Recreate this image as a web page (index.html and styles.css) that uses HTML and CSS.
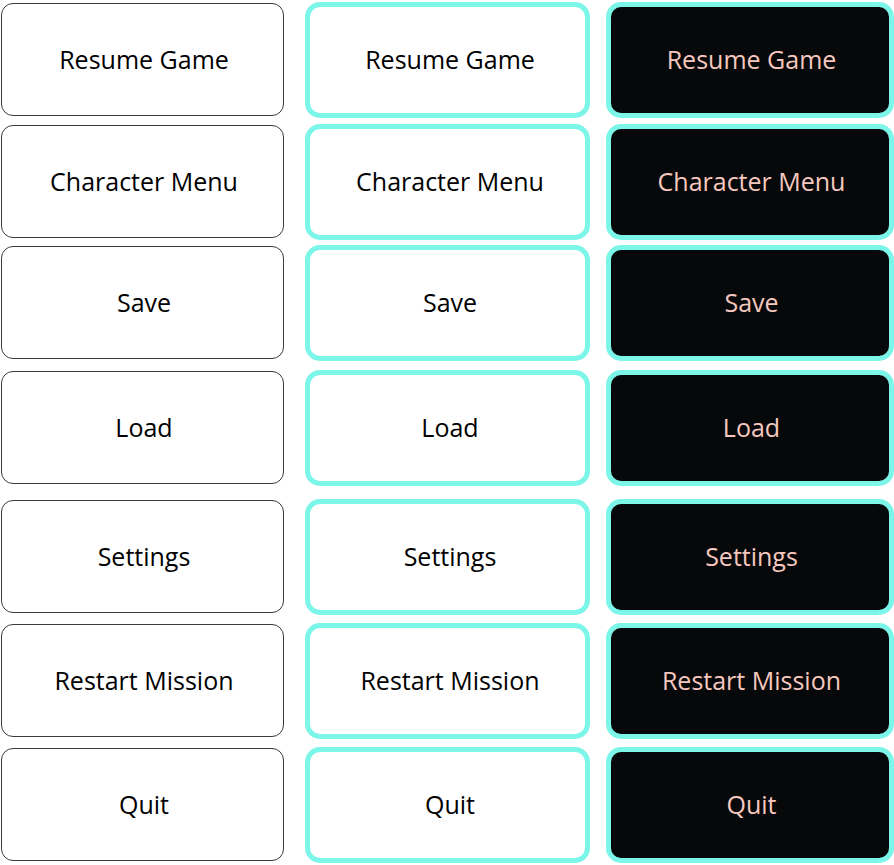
FILE: index.html
```html
<!DOCTYPE html>
<html>
<head>
<meta charset="utf-8">
<link rel="stylesheet" href="styles.css">
</head>
<body>
<div class="menu">
  <div class="row"><div class="btn plain">Resume Game</div><div class="btn outline">Resume Game</div><div class="btn dark">Resume Game</div></div>
  <div class="row"><div class="btn plain">Character Menu</div><div class="btn outline">Character Menu</div><div class="btn dark">Character Menu</div></div>
  <div class="row"><div class="btn plain">Save</div><div class="btn outline">Save</div><div class="btn dark">Save</div></div>
  <div class="row"><div class="btn plain">Load</div><div class="btn outline">Load</div><div class="btn dark">Load</div></div>
  <div class="row"><div class="btn plain">Settings</div><div class="btn outline">Settings</div><div class="btn dark">Settings</div></div>
  <div class="row"><div class="btn plain">Restart Mission</div><div class="btn outline">Restart Mission</div><div class="btn dark">Restart Mission</div></div>
  <div class="row"><div class="btn plain">Quit</div><div class="btn outline">Quit</div><div class="btn dark">Quit</div></div>
</div>
</body>
</html>
```
FILE: styles.css
```css
html, body {
  margin: 0;
  padding: 0;
  background: #ffffff;
}
body {
  width: 894px;
  height: 865px;
  overflow: hidden;
  font-family: "Open Sans", "Liberation Sans", sans-serif;
}
.menu {
  display: flex;
  flex-direction: column;
  padding-top: 2px;
}
.row {
  display: flex;
  height: 116px;
}
.row:nth-child(2) { margin-top: 6px; }
.row:nth-child(3) { margin-top: 5px; }
.row:nth-child(4) { margin-top: 9px; }
.row:nth-child(5) { margin-top: 13px; }
.row:nth-child(6) { margin-top: 8px; }
.row:nth-child(7) { margin-top: 8px; }
.btn {
  box-sizing: border-box;
  display: flex;
  align-items: center;
  justify-content: center;
  font-size: 25px;
}
.plain {
  width: 283px;
  margin: 1px 0 2px 1px;
  border: 1px solid #3a3a3a;
  border-radius: 12px;
  color: #000;
  padding: 0 0 1px 3px;
}
.outline {
  width: 285px;
  margin-left: 21px;
  border: 5px solid #7cf6e8;
  border-radius: 15px;
  color: #000;
  padding: 0 0 2px 5px;
}
.dark {
  width: 288px;
  margin-left: 16px;
  border: 5px solid #7cf6e8;
  border-radius: 15px;
  background: #070809;
  color: #f6c8bf;
  padding: 0 0 2px 3px;
}
```
